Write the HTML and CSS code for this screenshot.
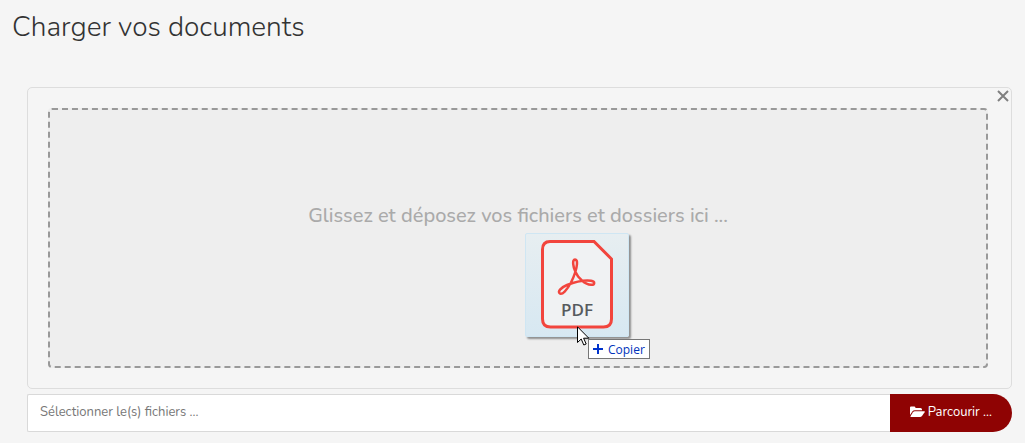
FILE: index.html
```html
<!DOCTYPE html>
<html lang="fr">
<head>
  <meta charset="UTF-8" />
  <meta name="viewport" content="width=device-width, initial-scale=1.0" />
  <title>Charger vos documents</title>
  <link rel="stylesheet" href="styles.css">
</head>
<body>
  <main class="page">
    <h1>Charger vos documents</h1>

    <form class="upload">
      <div class="preview">
        <button type="button" class="close" aria-label="Fermer">
          <svg width="12" height="12" viewBox="0 0 12 12"><path d="M1 1L11 11M11 1L1 11" /></svg>
        </button>
        <div class="dropzone">
          <p>Glissez et déposez vos fichiers et dossiers ici ...</p>

          <!-- file being dragged -->
          <div class="dragged">
            <svg width="102" height="102" viewBox="1 1 102 102">
              <path class="sheet" d="M25 8.500H69L86.500 26V86Q86.500 94 78.500 94H25.500Q17.500 94 17.500 86V16.500Q17.500 8.500 25 8.500Z" />
              <path class="acrobat" d="M50 26.500C47 26.500 48 34 50.500 39C53 45 60 51.500 66 51.800C70 52 70.500 48.500 66 47.800C60 47 50 49 42 52C35 55 33 58.500 34.500 60.200C37 62.500 42 57 46 49.500C49 43.500 51.500 37 52 31C52.200 28 51.500 26.500 50 26.500Z" />
              <text x="52" y="83" text-anchor="middle">PDF</text>
            </svg>
            <svg class="cursor" width="13" height="20" viewBox="0 0 13 20">
              <path d="M.5 .8V16.500L4.200 13L6.800 19L9.200 18L6.600 12.200H11.800Z" />
            </svg>
            <span class="copy">
              <svg width="10" height="10" viewBox="0 0 10 10"><path d="M5 0V10M0 5H10" /></svg>
              Copier
            </span>
          </div>
        </div>
      </div>

      <div class="input-group">
        <input type="text" placeholder="Sélectionner le(s) fichiers ..." aria-label="Sélectionner le(s) fichiers" readonly />
        <button type="button" class="browse">
          <svg width="15" height="12" viewBox="0 0 15 12">
            <path d="M0 9V1.500Q0 .5 1 .5H4.500Q5.500 .5 5.500 2H10.500Q12 2 12 3.500V4.300H4.800Q3.300 4.300 2.500 5.300Z" />
            <path d="M4.800 5.200H14.300Q15.200 5.200 14.600 6.200L12 10Q11.200 11 10 11H1Q0 11 .6 10L3 6.200Q3.700 5.200 4.800 5.200Z" />
          </svg>
          Parcourir ...
        </button>
      </div>
    </form>
  </main>
</body>
</html>
```

FILE: styles.css
```css
* { box-sizing: border-box; }
body {
  margin: 0;
  background: #f5f5f5;
  color: #333;
  font-family: Nunito, Lato, sans-serif;
}
.page { padding: 8px 12px; }
h1 {
  margin: 0;
  font-size: 28px;
  line-height: 38px;
  font-weight: 350;
}
.upload { margin: 41px 1px 0 15px; }
.preview {
  position: relative;
  padding: 20px 23px 20px 20px;
  border: 1px solid #ddd;
  border-radius: 5px;
}
.close {
  position: absolute;
  top: 0;
  right: 0;
  display: flex;
  padding: 2px;
  border: 0;
  background: none;
  cursor: pointer;
}
.close path { stroke: #808080; stroke-width: 2; }
.dropzone {
  position: relative;
  display: flex;
  justify-content: center;
  height: 260px;
  padding-top: 92px;
  border: 2px dashed #999;
  border-radius: 4px;
  background: #eee;
}
.dropzone p {
  margin: 0;
  color: #aaa;
  font-size: 20px;
  line-height: 28px;
  font-weight: 500;
}
.dragged {
  position: absolute;
  top: 123px;
  left: calc(50% + 7px);
  border: 1px solid #cfe6f3;
  border-radius: 2px;
  background: linear-gradient(#e7eef1, #d7e8f2);
  box-shadow: 2px 2px 2px rgba(0, 0, 0, 0.4);
}
.dragged > svg { display: block; }
.sheet { fill: #f0f2f3; stroke: #f2453d; stroke-width: 3; }
.acrobat { fill: none; stroke: #f2453d; stroke-width: 2.500; }
.dragged text {
  fill: #565b5e;
  font-family: "Open Sans", sans-serif;
  font-size: 17px;
  font-weight: 600;
}
.cursor { position: absolute; top: 92px; left: 51px; }
.cursor path { fill: #fff; stroke: #000; }
.copy {
  position: absolute;
  top: 105px;
  left: 62px;
  display: flex;
  align-items: center;
  gap: 5px;
  height: 20px;
  padding: 0 4px 0 4px;
  border: 1px solid #767676;
  background: #fff;
  color: #0033bb;
  font-family: "Open Sans", sans-serif;
  font-size: 12px;
}
.copy path { stroke: #0033cc; stroke-width: 2; }
.input-group { display: flex; margin-top: 5px; }
.input-group input {
  flex: 1;
  min-width: 0;
  height: 38px;
  padding: 0 12px 2px;
  border: 1px solid #d9d9d9;
  border-right: 0;
  border-radius: 2px 0 0 2px;
  background: #fff;
  font: inherit;
  font-size: 13px;
}
.input-group input::placeholder { color: #777; }
.browse {
  display: flex;
  align-items: center;
  gap: 3px;
  padding: 0 20px 2px;
  border: 0;
  border-radius: 0 19px 19px 0;
  background: #8f0303;
  color: #fff;
  font: inherit;
  font-size: 13px;
  cursor: pointer;
}
.browse svg { fill: #fff; }
```
